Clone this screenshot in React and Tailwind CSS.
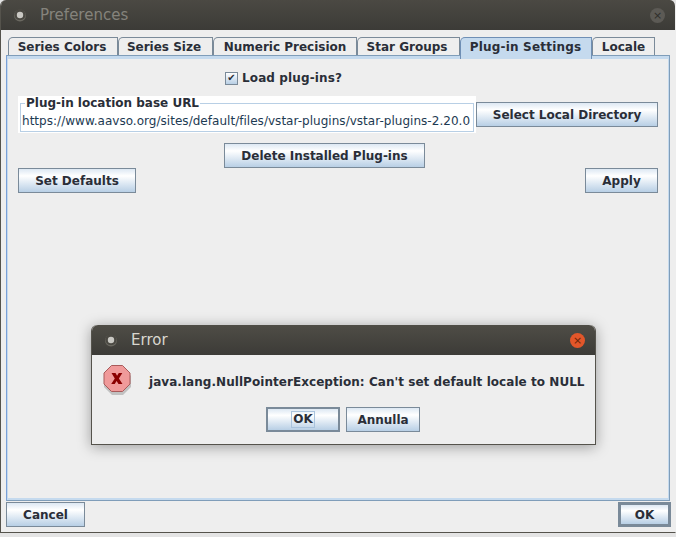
import React from "react";

const btn = "flex items-center justify-center border-[#7a8a99] bg-gradient-to-b from-[#dde8f3] via-white via-30% to-[#b8cfe5] font-bold text-[#2a2e38] text-[12px] h-[25px]";
const tabClass = "flex items-center justify-center rounded-tl-[5px] border border-b-0 font-bold text-[12px] text-[#2a2e38]";
const idleTab = "h-[18px] border-[#7a8a99] bg-[#eeeeee]";

function TitleDot() {
  return (
    <svg width="14" height="14" viewBox="0 0 14 14" className="shrink-0">
      <circle cx="7" cy="7.5" r="6" fill="#6a6860" />
      <circle cx="7" cy="6.5" r="5.6" fill="#4a4842" />
      <circle cx="7" cy="7" r="3.2" fill="#c9c8c3" />
    </svg>
  );
}

function StopIcon() {
  return (
    <svg width="30" height="30" viewBox="0 0 30 30" className="shrink-0">
      <polygon points="9,3 20,3 28,11 28,22 20,30 9,30 1,22 1,11" fill="#00000030" />
      <polygon points="8.5,0.5 19.5,0.5 27,8 27,19 19.5,26.5 8.5,26.5 1,19 1,8" fill="#f09a9a" stroke="#a85a5a" strokeWidth="1" />
      <path d="M8.5 8h4l1.6 2.8L15.8 8h3.5l-3.4 5.4 3.6 5.6h-4l-1.9-3-1.9 3H8.2l3.6-5.6z" fill="#8a0000" />
    </svg>
  );
}

export default function App() {
  return (
    <div className="relative w-[676px] h-[537px] overflow-hidden bg-[#e4e4e4] font-['DejaVu_Sans',sans-serif]">
      <div className="flex flex-col h-[533px] bg-[#eeeeee] border-l border-b border-r border-r-transparent border-[#55534c] rounded-t-[6px] overflow-hidden">
        <div className="flex items-center h-[30px] shrink-0 bg-gradient-to-b from-[#4b4943] to-[#3c3b37] pl-[12px] pr-[10px]">
          <TitleDot />
          <span className="ml-[13px] text-[15px] text-[#85837c]">Preferences</span>
          <span className="ml-auto flex items-center justify-center w-[15px] h-[15px] rounded-full bg-[#5c5a55] text-[#2f2e2b] text-[11px] leading-none">×</span>
        </div>

        <div className="flex flex-col flex-1 px-[5px]">
          <div className="flex pl-[2px] mt-[7px] h-[18px]">
            <div className={`${tabClass} ${idleTab} w-[110px] pr-[2px]`}>Series Colors</div>
            <div className={`${tabClass} ${idleTab} w-[95px] pr-[3px]`}>Series Size</div>
            <div className={`${tabClass} ${idleTab} w-[144px]`}>Numeric Precision</div>
            <div className={`${tabClass} ${idleTab} w-[103px] pr-[3px]`}>Star Groups</div>
            <div className={`${tabClass} w-[132px] h-[22px] pb-[4px] pr-[1px] tracking-[0.2px] bg-[#c5daee] border-[#6f8fb5] relative z-10`}>Plug-in Settings</div>
            <div className={`${tabClass} ${idleTab} w-[63px]`}>Locale</div>
          </div>

          <div className="h-[446px] border border-[#7f9db9] border-l-[#7aa0d8]">
            <div className="h-full border-t-[3px] border-x-[1px] border-b-[2px] border-[#c5daee] px-[10px]">
              <div className="flex items-center h-[35px] pt-[3px] pl-[207px] font-bold text-[12px] text-[#2a2e38] gap-[4px]">
                <span className="flex items-center justify-center w-[13px] h-[13px] border border-[#7a8a99] bg-gradient-to-b from-white to-[#b8cfe5] text-[10px] leading-none">✔</span>
                <span className="tracking-[0.12px]">Load plug-ins?</span>
              </div>

              <div className="flex items-start mt-[2px]">
                <div className="relative w-[458px] h-[37px] bg-white px-[2px] pt-[7px]">
                  <div className="h-[29px] border border-[#b8cfe5] pt-[8px] pl-[1px] text-[12px] leading-[18px] tracking-[0.03px] text-[#1d3a52] whitespace-nowrap">
                    https://www.aavso.org/sites/default/files/vstar-plugins/vstar-plugins-2.20.0
                  </div>
                  <span className="absolute left-[7px] top-0 bg-white px-[1px] font-bold text-[12px] leading-[14px] text-[#2a2e38]">Plug-in location base URL</span>
                </div>
                <div className={`${btn} border mt-[6px] w-[182px]`}>Select Local Directory</div>
              </div>

              <div className="flex mt-[10px] pl-[206px]">
                <div className={`${btn} border w-[201px]`}>Delete Installed Plug-ins</div>
              </div>

              <div className="flex justify-between">
                <div className={`${btn} border w-[118px]`}>Set Defaults</div>
                <div className={`${btn} border w-[73px]`}>Apply</div>
              </div>
            </div>
          </div>

          <div className="flex justify-between mt-[1px] -mr-[1px]">
            <div className={`${btn} border w-[79px]`}>Cancel</div>
            <div className={`${btn} border-[3px] w-[53px]`}>OK</div>
          </div>
        </div>
      </div>

      <div className="absolute left-[91px] top-[325px] w-[505px] h-[120px] flex flex-col bg-[#eeeeee] border-x border-b border-[#55534c] rounded-t-[6px] shadow-[0_2px_14px_rgba(0,0,0,0.35)]">
        <div className="flex items-center h-[30px] shrink-0 rounded-t-[6px] bg-gradient-to-b from-[#4f4d46] to-[#3c3b37] pl-[12px] pr-[10px]">
          <TitleDot />
          <span className="ml-[13px] text-[15px] text-[#d8d6cf]">Error</span>
          <span className="ml-auto flex items-center justify-center w-[15px] h-[15px] rounded-full bg-[#e2562a] text-[#6b2408] text-[11px] leading-none">×</span>
        </div>
        <div className="flex items-start pl-[11px] pt-[10px] h-[52px]">
          <StopIcon />
          <span className="ml-[16px] mt-[8px] font-bold text-[12px] leading-[18px] tracking-[0.05px] text-[#2a2e38] whitespace-nowrap">java.lang.NullPointerException: Can't set default locale to NULL</span>
        </div>
        <div className="flex justify-center gap-[6px] pr-[1px]">
          <div className={`${btn} w-[74px] border-2`}>
            <span className="border border-[#a9c3dd] px-[1px] leading-[15px]">OK</span>
          </div>
          <div className={`${btn} w-[74px] border`}>Annulla</div>
        </div>
      </div>
    </div>
  );
}
